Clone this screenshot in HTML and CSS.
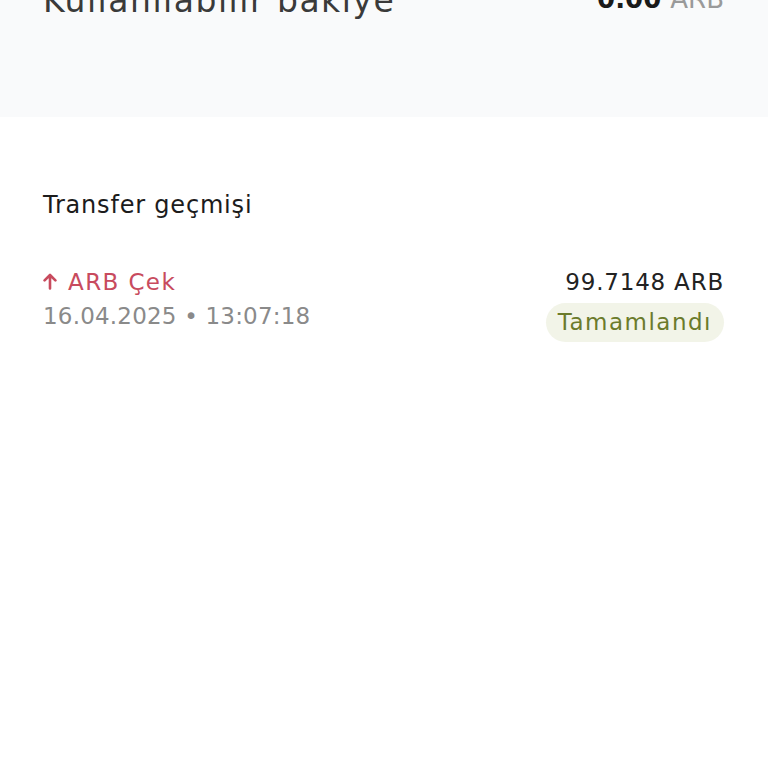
FILE: index.html
```html
<!DOCTYPE html>
<html lang="tr">
<head>
<meta charset="utf-8">
<link rel="stylesheet" href="styles.css">
</head>
<body>
<div class="page">
  <section class="balance">
    <div class="balance-row">
      <span class="balance-label">Kullanılabilir bakiye</span>
      <span class="balance-value">0.00 <span class="unit">ARB</span></span>
    </div>
  </section>
  <section class="history">
    <h2 class="history-title">Transfer geçmişi</h2>
    <div class="tx">
      <div class="tx-left">
        <div class="tx-type"><svg class="arrow" width="14" height="17" viewBox="0 0 14 17"><path d="M7 15.5V2M1.6 7.4L7 2l5.4 5.4" fill="none" stroke="currentColor" stroke-width="2.6" stroke-linecap="round" stroke-linejoin="round"/></svg>ARB Çek</div>
        <div class="tx-date">16.04.2025 • 13:07:18</div>
      </div>
      <div class="tx-right">
        <div class="tx-amount">99.7148 ARB</div>
        <span class="badge">Tamamlandı</span>
      </div>
    </div>
  </section>
</div>
</body>
</html>
```
FILE: styles.css
```css
* { box-sizing: border-box; }
html, body { margin: 0; padding: 0; background: #fff; }
body { font-family: "DejaVu Sans", "Open Sans", sans-serif; color: #222; }
.page { display: flex; flex-direction: column; }
.balance {
  background: #f9fafb;
  height: 117px;
  padding: 0 44px 0 43px;
  overflow: hidden;
}
.balance-row {
  display: flex;
  justify-content: space-between;
  align-items: flex-start;
  margin-top: -19px;
}
.balance-label { font-size: 33px; line-height: 40px; color: #3a3a3a; letter-spacing: 1.5px; }
.balance-value { font-size: 26px; line-height: 32px; margin-top: 2px; color: #1a1a1a; font-weight: 700; }
.balance-value .unit { color: #9a9a9a; font-weight: 400; }
.history { padding: 74px 44px 0 43px; }
.history-title {
  margin: 0;
  font-size: 24px;
  font-weight: 400;
  color: #1c1c1c;
  line-height: 28px;
  letter-spacing: 0.8px;
}
.tx {
  display: flex;
  justify-content: space-between;
  margin-top: 48px;
}
.tx-left, .tx-right { display: flex; flex-direction: column; }
.tx-right { align-items: flex-end; }
.tx-type {
  display: flex;
  align-items: center;
  gap: 11px;
  font-size: 23px;
  color: #c84b5e;
  line-height: 30px;
  letter-spacing: 1.4px;
}
.arrow { color: #c84b5e; margin-top: -1px; }
.tx-date { font-size: 23px; color: #8a8a8a; line-height: 34px; margin-top: 2px; letter-spacing: 0.2px; }
.tx-amount { font-size: 23px; color: #222; line-height: 30px; letter-spacing: 0.8px; }
.badge {
  margin-top: 6px;
  background: #f2f4e8;
  color: #6b7b2b;
  font-size: 23px;
  line-height: 39px;
  padding: 0 12px;
  border-radius: 20px;
  letter-spacing: 1.5px;
}
```
